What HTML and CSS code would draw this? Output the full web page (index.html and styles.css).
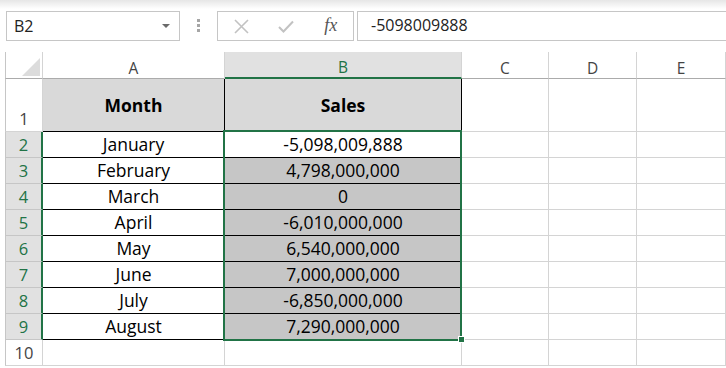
FILE: index.html
```html
<!DOCTYPE html>
<html lang="en">
<head>
    <meta charset="UTF-8">
    <meta name="viewport" content="width=device-width, initial-scale=1.0">
    <title>Sales by Month</title>
    <link rel="stylesheet" href="styles.css">
</head>
<body>
    <div class="formula-bar">
        <div class="name-box">
            <span>B2</span>
            <span class="arrow"></span>
        </div>
        <div class="grip"><i></i><i></i><i></i></div>
        <div class="buttons">
            <span class="btn">
                <svg width="15" height="15" viewBox="0 0 15 15"><path d="M1 1 L14 14 M14 1 L1 14" stroke="#c2c2c2" stroke-width="1.6" fill="none"/></svg>
            </span>
            <span class="btn">
                <svg width="16" height="13" viewBox="0 0 16 13"><path d="M1 7 L5.5 11.5 L15 1.5" stroke="#c2c2c2" stroke-width="2" fill="none"/></svg>
            </span>
            <span class="btn fx">fx</span>
        </div>
        <div class="formula">-5098009888</div>
    </div>

    <div class="sheet">
        <div class="corner"></div>
        <div class="col-head">A</div>
        <div class="col-head active">B</div>
        <div class="col-head">C</div>
        <div class="col-head">D</div>
        <div class="col-head">E</div>

        <div class="row-head tall">1</div>
        <div class="cell tbl title">Month</div>
        <div class="cell tbl title">Sales</div>
        <div class="cell"></div><div class="cell"></div><div class="cell"></div>

        <div class="row-head active">2</div>
        <div class="cell tbl">January</div>
        <div class="cell tbl">-5,098,009,888</div>
        <div class="cell"></div><div class="cell"></div><div class="cell"></div>

        <div class="row-head active">3</div>
        <div class="cell tbl">February</div>
        <div class="cell tbl sel">4,798,000,000</div>
        <div class="cell"></div><div class="cell"></div><div class="cell"></div>

        <div class="row-head active">4</div>
        <div class="cell tbl">March</div>
        <div class="cell tbl sel">0</div>
        <div class="cell"></div><div class="cell"></div><div class="cell"></div>

        <div class="row-head active">5</div>
        <div class="cell tbl">April</div>
        <div class="cell tbl sel">-6,010,000,000</div>
        <div class="cell"></div><div class="cell"></div><div class="cell"></div>

        <div class="row-head active">6</div>
        <div class="cell tbl">May</div>
        <div class="cell tbl sel">6,540,000,000</div>
        <div class="cell"></div><div class="cell"></div><div class="cell"></div>

        <div class="row-head active">7</div>
        <div class="cell tbl">June</div>
        <div class="cell tbl sel">7,000,000,000</div>
        <div class="cell"></div><div class="cell"></div><div class="cell"></div>

        <div class="row-head active">8</div>
        <div class="cell tbl">July</div>
        <div class="cell tbl sel">-6,850,000,000</div>
        <div class="cell"></div><div class="cell"></div><div class="cell"></div>

        <div class="row-head active">9</div>
        <div class="cell tbl">August</div>
        <div class="cell tbl sel">7,290,000,000</div>
        <div class="cell"></div><div class="cell"></div><div class="cell"></div>

        <div class="row-head">10</div>
        <div class="cell"></div><div class="cell"></div>
        <div class="cell"></div><div class="cell"></div><div class="cell"></div>

        <div class="selection"><span class="handle"></span></div>
    </div>
</body>
</html>
```

FILE: styles.css
```css
* {
    box-sizing: border-box;
}

body {
    margin: 0;
    width: 726px;
    height: 368px;
    overflow: hidden;
    background-color: #fff;
    font-family: "Open Sans", "Noto Sans", sans-serif;
    color: #000;
}

/* formula bar */
.formula-bar {
    display: flex;
    align-items: flex-start;
    height: 52px;
    padding-top: 11px;
    background: linear-gradient(#e6e6e6, #fff 9px);
}

.name-box {
    display: flex;
    align-items: center;
    justify-content: space-between;
    width: 174px;
    height: 30px;
    margin-left: 6px;
    padding: 0 9px 0 7px;
    border: 1px solid #c6c6c6;
    background-color: #fff;
    font-size: 16px;
    color: #222;
}

.arrow {
    width: 0;
    height: 0;
    border-left: 4px solid transparent;
    border-right: 4px solid transparent;
    border-top: 4px solid #6a6a6a;
}

.grip {
    display: flex;
    flex-direction: column;
    gap: 2px;
    margin: 8px 17px 0 17px;
}

.grip i {
    display: block;
    width: 3px;
    height: 3px;
    background-color: #a6a6a6;
}

.buttons {
    display: flex;
    align-items: center;
    width: 137px;
    height: 30px;
    padding-left: 1px;
    border: 1px solid #c6c6c6;
    background-color: #fff;
}

.btn {
    display: flex;
    justify-content: center;
    align-items: center;
    width: 45px;
    height: 28px;
}

.fx {
    font-family: "Liberation Serif", serif;
    font-style: italic;
    font-size: 18px;
    color: #555;
    padding-bottom: 2px;
}

.formula {
    flex: 1;
    height: 30px;
    margin-left: 3px;
    padding-left: 13px;
    border: 1px solid #c6c6c6;
    border-right: none;
    background-color: #fff;
    font-size: 16px;
    line-height: 27px;
    color: #222;
}

/* sheet grid */
.sheet {
    position: relative;
    display: grid;
    grid-template-columns: 38px 182px 237px 87px 88px 89px;
    grid-template-rows: 27px 53px repeat(9, 26px) 26px;
    margin-left: 5px;
}

.corner {
    position: relative;
    border-left: 1px solid #c6c6c6;
    border-right: 1px solid #d4d4d4;
    border-bottom: 1px solid #ababab;
}

.corner::after {
    content: "";
    position: absolute;
    right: 2px;
    bottom: 2px;
    border-left: 18px solid transparent;
    border-bottom: 18px solid #dcdcdc;
}

.col-head {
    display: flex;
    justify-content: center;
    align-items: flex-end;
    border-right: 1px solid #d4d4d4;
    border-bottom: 1px solid #ababab;
    font-size: 15.5px;
    line-height: 20px;
    color: #444;
}

.col-head.active {
    background-color: #e1e1e1;
    border-bottom: 2px solid #217346;
    color: #217346;
}

.row-head {
    display: flex;
    justify-content: center;
    align-items: flex-end;
    padding-bottom: 2px;
    border-left: 1px solid #c6c6c6;
    border-right: 1px solid #d4d4d4;
    border-bottom: 1px solid #d4d4d4;
    font-size: 16.5px;
    line-height: 20px;
    color: #444;
}

.row-head.active {
    background-color: #e1e1e1;
    border-right: 2px solid #217346;
    border-bottom-color: #c6c6c6;
    color: #217346;
}

.cell {
    display: flex;
    justify-content: center;
    align-items: flex-end;
    padding-bottom: 2px;
    border-right: 1px solid #d4d4d4;
    border-bottom: 1px solid #d4d4d4;
    font-size: 17.5px;
    line-height: 22px;
    white-space: nowrap;
}

.cell.tbl {
    border-right-color: #000;
    border-bottom-color: #000;
}

.cell.title {
    align-items: center;
    padding-bottom: 0;
    background-color: #d9d9d9;
    font-weight: bold;
}

.cell.sel {
    background-color: #c6c6c6;
}

/* green selection frame over B2:B9 */
.selection {
    position: absolute;
    grid-column: 3 / 4;
    grid-row: 3 / 11;
    top: -2px;
    left: -2px;
    right: 0;
    bottom: -1px;
    border: 2px solid #217346;
    pointer-events: none;
}

.handle {
    position: absolute;
    right: -5px;
    bottom: -4px;
    width: 7px;
    height: 7px;
    border: 1px solid #fff;
    background-color: #217346;
}
```
